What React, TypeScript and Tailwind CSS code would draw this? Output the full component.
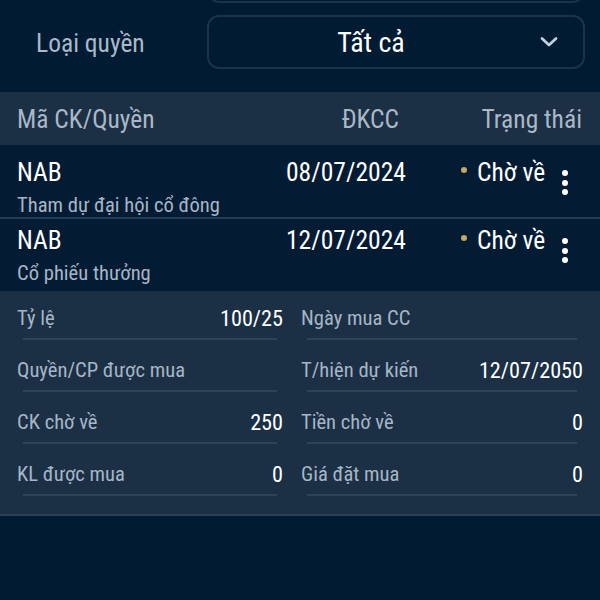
import React from "react";

const font = { fontFamily: "'Roboto Condensed', Roboto, 'Noto Sans', sans-serif" };

function Kebab() {
  return (
    <div className="flex w-[6px] flex-col items-center gap-[3.5px] pt-[11px]">
      <span className="block h-[6px] w-[6px] rounded-full bg-white" />
      <span className="block h-[6px] w-[6px] rounded-full bg-white" />
      <span className="block h-[6px] w-[6px] rounded-full bg-white" />
    </div>
  );
}

function Row({ date, sub, first }: { date: string; sub: string; first?: boolean }) {
  return (
    <div className={"bg-[#041c33] " + (first ? "border-b-2 border-[#263c52] pt-[14px]" : "pt-[8px] pb-[6px]")}>
      <div className="flex">
        <div className="w-[270px] pl-[17px]">
          <div className="text-[25.5px] leading-[26px] text-white">NAB</div>
          <div className="mt-[8px] text-[20.6px] leading-[24px] text-[#a6b6c6]">{sub}</div>
        </div>
        <div className="w-[136px] text-right text-[25.6px] leading-[26px] text-white">{date}</div>
        <div className="flex w-[156px] items-start pl-[55px]">
          <span className="mt-[8px] mr-[10px] block h-[6px] w-[6px] rounded-full bg-[#c6a662]" />
          <span className="text-[25.5px] leading-[26px] text-white">Chờ về</span>
        </div>
        <Kebab />
      </div>
    </div>
  );
}

function Item({ label, value }: { label: string; value?: string }) {
  return (
    <div className="pt-[14px] pb-[4px]">
      <div className="flex h-[24px] items-center justify-between">
        <span className="text-[20.6px] leading-[24px] text-[#a6b6c6]">{label}</span>
        <span className="text-[22.2px] leading-[24px] text-white">{value}</span>
      </div>
      <div className="mx-[6px] mt-[8px] h-[2px] bg-[#2c4359]" />
    </div>
  );
}

export default function App() {
  return (
    <div className="h-[600px] w-[600px] overflow-hidden bg-[#011b32]" style={font}>
      <div className="ml-[207px] -mt-[41px] h-[44px] w-[378px] rounded-[12px] border-2 border-[#1c344b]" />
      <div className="flex items-center pt-[12px]">
        <div className="w-[207px] pl-[36px] pt-[2px] text-[25.5px] text-[#a9b9c9]">Loại quyền</div>
        <div className="flex h-[54px] w-[378px] items-center rounded-[12px] border-2 border-[#1c344b]">
          <div className="flex-1 pt-[2px] text-center text-[28px] leading-[32px] text-white">Tất cả</div>
          <div className="flex w-[50px] items-center justify-start pl-[6px]">
            <svg width="20" height="12" viewBox="0 0 20 12">
              <path d="M3 2.5 L10 9 L17 2.5" fill="none" stroke="#c3cfda" strokeWidth="2.8" strokeLinecap="round" strokeLinejoin="round" />
            </svg>
          </div>
        </div>
      </div>
      <div className="mt-[23px] flex h-[53px] items-center bg-[#1b2f45] pt-[2px] text-[25.5px] text-[#aab8c6]">
        <div className="w-[270px] pl-[17px]">Mã CK/Quyền</div>
        <div className="w-[129px] text-right">ĐKCC</div>
        <div className="flex-1 pr-[18px] text-right">Trạng thái</div>
      </div>
      <Row date="08/07/2024" sub="Tham dự đại hội cổ đông" first />
      <Row date="12/07/2024" sub="Cổ phiếu thưởng" />
      <div className="border-b-2 border-[#2b4157] bg-[#1b3045] pt-[1px] pb-[14px]">
        <div className="grid grid-cols-[266px_282px] gap-x-[18px] pl-[17px]">
          <Item label="Tỷ lệ" value="100/25" />
          <Item label="Ngày mua CC" value="" />
          <Item label="Quyền/CP được mua" value="" />
          <Item label="T/hiện dự kiến" value="12/07/2050" />
          <Item label="CK chờ về" value="250" />
          <Item label="Tiền chờ về" value="0" />
          <Item label="KL được mua" value="0" />
          <Item label="Giá đặt mua" value="0" />
        </div>
      </div>
    </div>
  );
}
